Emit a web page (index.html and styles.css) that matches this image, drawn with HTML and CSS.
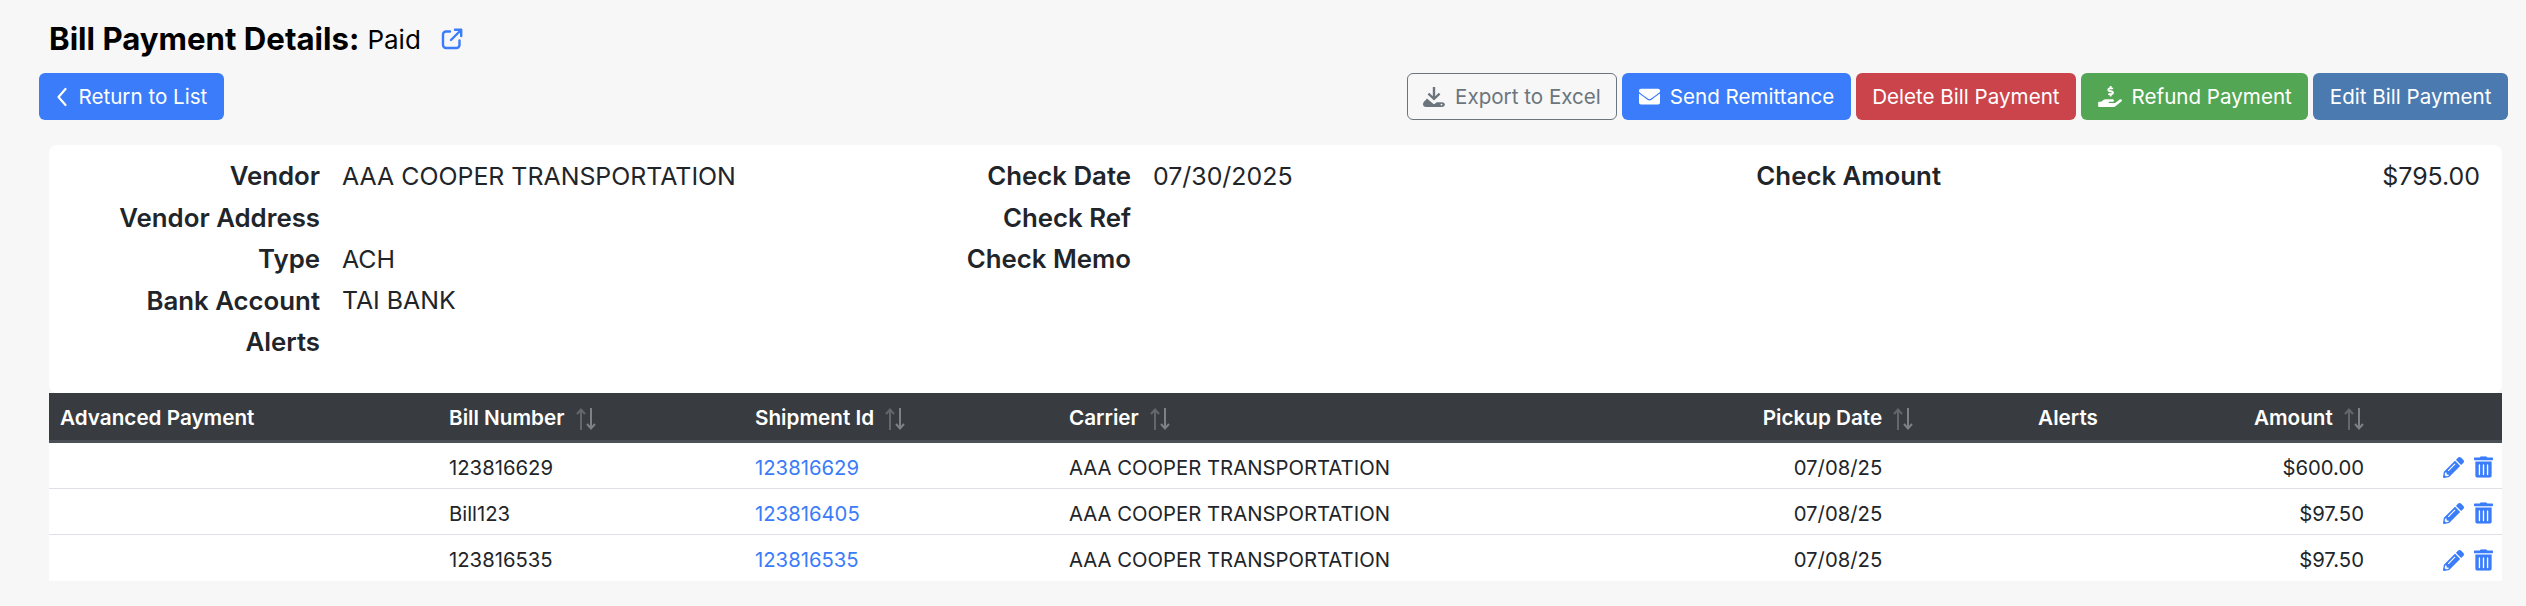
FILE: index.html
```html
<!DOCTYPE html>
<html lang="en">
<head>
  <meta charset="UTF-8">
  <title>Bill Payment Details</title>
  <link rel="stylesheet" href="styles.css">
</head>
<body>
  <!-- Title -->
  <div class="page-title">
    <h1>Bill Payment Details:</h1>
    <span class="status">Paid</span>
    <a href="#" class="title-link">
      <svg class="icon-open" viewBox="0 0 22 22" fill="none" stroke="currentColor" stroke-width="2.4" stroke-linecap="round" stroke-linejoin="round"><path d="M9 3.5H5A3 3 0 0 0 2 6.500V17a3 3 0 0 0 3 3h10.500a3 3 0 0 0 3-3v-4.500"/><path d="M14 1.800h6.200V8M20 2l-10 10"/></svg>
    </a>
  </div>

  <!-- Buttons -->
  <div class="actions">
    <button class="btn btn-blue">
      <svg class="icon-back" viewBox="0 0 12 20" fill="none" stroke="currentColor" stroke-width="2.200" stroke-linecap="round" stroke-linejoin="round"><path d="M9.500 2L2.500 10l7 8"/></svg>
      Return to List
    </button>
    <div class="actions-right">
      <button class="btn btn-outline">
        <svg class="icon-export" viewBox="0 0 22 20" fill="currentColor"><path d="M9.800 0h2.400v9.200l3.600-3.400 1.600 1.600-6.400 6.200-6.400-6.200 1.600-1.600 3.600 3.400z"/><path fill-rule="evenodd" d="M4 11.500l6.200 5.300c.5.400 1.100.4 1.600 0l2-1.600H19a3 3 0 0 1 3 2.400A2.900 2.900 0 0 1 19 20H3a3 3 0 0 1-3-2.800c0-1.700 1.300-2.900 2-3.500zM18.500 16.700a.9.900 0 1 0 0 1.800.9.900 0 0 0 0-1.800z"/></svg>
        Export to Excel
      </button>
      <button class="btn btn-blue">
        <svg class="icon-mail" viewBox="0 0 512 512" fill="currentColor"><path d="M502.3 190.800c3.900-3.100 9.700-.2 9.700 4.700V400c0 26.500-21.500 48-48 48H48c-26.500 0-48-21.500-48-48V195.600c0-5 5.700-7.800 9.700-4.700 22.400 17.400 52.100 39.500 154.100 113.600 21.100 15.400 56.700 47.800 92.200 47.600 35.700.3 72-32.800 92.300-47.600 102-74.100 131.600-96.300 154-113.700zM256 320c23.200.4 56.600-29.200 73.400-41.400 132.700-96.300 142.800-104.700 173.400-128.700 5.800-4.500 9.200-11.500 9.200-18.900v-19c0-26.500-21.500-48-48-48H48C21.500 64 0 85.500 0 112v19c0 7.400 3.400 14.300 9.200 18.900 30.600 23.900 40.700 32.400 173.400 128.700 16.800 12.200 50.200 41.800 73.400 41.400z"/></svg>
        Send Remittance
      </button>
      <button class="btn btn-red">Delete Bill Payment</button>
      <button class="btn btn-green">
        <svg class="icon-refund" viewBox="0 0 576 512" fill="currentColor"><path d="M271.060 144.300l54.270 14.300a8.590 8.590 0 0 1 6.630 8.100c0 4.600-4.090 8.400-9.120 8.400h-35.600a30 30 0 0 1-11.190-2.200c-5.240-2.200-11.280-1.700-15.300 2l-19 17.500a11.680 11.680 0 0 0-2.250 2.660 11.420 11.420 0 0 0 3.880 15.740 83.420 83.420 0 0 0 34.510 11.500V240c0 8.800 7.830 16 17.370 16h17.370c9.550 0 17.380-7.200 17.380-16V222.400c32.930-3.600 57.840-31 53.500-63-3.150-23-22.460-41.300-46.560-47.700L282.680 97.400a8.590 8.590 0 0 1-6.630-8.100c0-4.600 4.090-8.400 9.120-8.400h35.600A30 30 0 0 1 332 83.100c5.230 2.200 11.280 1.700 15.300-2l19-17.500A11.310 11.310 0 0 0 368.470 61a11.430 11.430 0 0 0-3.840-15.780 83.820 83.820 0 0 0-34.520-11.500V16c0-8.800-7.820-16-17.37-16H295.37C285.820 0 278 7.200 278 16V33.600c-32.890 3.600-57.850 31-53.510 63C227.630 119.600 247 137.900 271.060 144.300zM565.270 328.100c-11.800-10.700-30.200-10-42.600 0L430.270 402a63.640 63.640 0 0 1-40 14H272a16 16 0 0 1 0-32h78.290c15.900 0 30.710-10.900 33.250-26.600a31.200 31.200 0 0 0 .46-5.460A32 32 0 0 0 352 320H192a117.660 117.660 0 0 0-74.100 26.290L71.400 384H16A16 16 0 0 0 0 400v96a16 16 0 0 0 16 16H372.770a64 64 0 0 0 40-14L564 377a32 32 0 0 0 1.270-48.900z"/></svg>
        Refund Payment
      </button>
      <button class="btn btn-steel">Edit Bill Payment</button>
    </div>
  </div>

  <!-- Payment summary -->
  <section class="summary">
    <dl class="group group-vendor">
      <dt>Vendor</dt><dd>AAA COOPER TRANSPORTATION</dd>
      <dt>Vendor Address</dt><dd></dd>
      <dt>Type</dt><dd>ACH</dd>
      <dt>Bank Account</dt><dd>TAI BANK</dd>
      <dt>Alerts</dt><dd></dd>
    </dl>
    <dl class="group group-check">
      <dt>Check Date</dt><dd>07/30/2025</dd>
      <dt>Check Ref</dt><dd></dd>
      <dt>Check Memo</dt><dd></dd>
    </dl>
    <dl class="group group-amount">
      <dt>Check Amount</dt><dd>$795.00</dd>
    </dl>
  </section>

  <!-- Bills -->
  <table class="bills">
    <colgroup>
      <col class="col-adv"><col class="col-bill"><col class="col-ship"><col class="col-carrier">
      <col class="col-date"><col class="col-alerts"><col class="col-amount"><col class="col-tools">
    </colgroup>
    <thead>
      <tr>
        <th>Advanced Payment</th>
        <th>Bill Number <svg class="sort" viewBox="0 0 20 22"><use href="#sort-arrows"/></svg></th>
        <th>Shipment Id <svg class="sort" viewBox="0 0 20 22"><use href="#sort-arrows"/></svg></th>
        <th>Carrier <svg class="sort" viewBox="0 0 20 22"><use href="#sort-arrows"/></svg></th>
        <th class="center">Pickup Date <svg class="sort" viewBox="0 0 20 22"><use href="#sort-arrows"/></svg></th>
        <th class="center">Alerts</th>
        <th class="right">Amount <svg class="sort" viewBox="0 0 20 22"><use href="#sort-arrows"/></svg></th>
        <th></th>
      </tr>
    </thead>
    <tbody>
      <tr>
        <td></td><td>123816629</td><td><a href="#">123816629</a></td><td>AAA COOPER TRANSPORTATION</td>
        <td class="center">07/08/25</td><td></td><td class="right">$600.00</td>
        <td class="tools"><svg class="icon-pencil" viewBox="0 0 512 512"><use href="#pencil"/></svg><svg class="icon-trash" viewBox="0 0 448 512"><use href="#trash"/></svg></td>
      </tr>
      <tr>
        <td></td><td>Bill123</td><td><a href="#">123816405</a></td><td>AAA COOPER TRANSPORTATION</td>
        <td class="center">07/08/25</td><td></td><td class="right">$97.50</td>
        <td class="tools"><svg class="icon-pencil" viewBox="0 0 512 512"><use href="#pencil"/></svg><svg class="icon-trash" viewBox="0 0 448 512"><use href="#trash"/></svg></td>
      </tr>
      <tr>
        <td></td><td>123816535</td><td><a href="#">123816535</a></td><td>AAA COOPER TRANSPORTATION</td>
        <td class="center">07/08/25</td><td></td><td class="right">$97.50</td>
        <td class="tools"><svg class="icon-pencil" viewBox="0 0 512 512"><use href="#pencil"/></svg><svg class="icon-trash" viewBox="0 0 448 512"><use href="#trash"/></svg></td>
      </tr>
    </tbody>
  </table>

  <!-- Shared icons -->
  <svg class="defs" aria-hidden="true">
    <symbol id="sort-arrows" viewBox="0 0 20 22">
      <path d="M5 22V2M1 6l4-4.500L9 6" fill="none" stroke="#63686d" stroke-width="2"/>
      <path d="M15 0v20M11 16l4 4.500 4-4.500" fill="none" stroke="#7d8287" stroke-width="2"/>
    </symbol>
    <symbol id="pencil" viewBox="0 0 512 512">
      <path fill="currentColor" d="M497.900 142.100l-46.100 46.100c-4.700 4.700-12.300 4.700-17 0l-111-111c-4.700-4.700-4.700-12.300 0-17l46.100-46.100c18.700-18.700 49.100-18.700 67.900 0l60.100 60.100c18.800 18.700 18.800 49.100 0 67.900zM284.200 99.800L21.600 362.400.4 483.900c-2.900 16.400 11.400 30.600 27.800 27.800l121.500-21.300 262.600-262.600c4.700-4.700 4.700-12.300 0-17l-111-111c-4.800-4.700-12.400-4.700-17.100 0zM124.100 339.900c-5.500-5.500-5.500-14.300 0-19.800l154-154c5.500-5.500 14.300-5.500 19.800 0s5.500 14.300 0 19.800l-154 154c-5.500 5.500-14.300 5.500-19.800 0zM88 424h48v36.300l-64.500 11.300-31.100-31.100L51.700 376H88v48z"/>
    </symbol>
    <symbol id="trash" viewBox="0 0 448 512">
      <path fill="currentColor" d="M32 464a48 48 0 0 0 48 48h288a48 48 0 0 0 48-48V128H32zm272-256a16 16 0 0 1 32 0v224a16 16 0 0 1-32 0zm-96 0a16 16 0 0 1 32 0v224a16 16 0 0 1-32 0zm-96 0a16 16 0 0 1 32 0v224a16 16 0 0 1-32 0zM432 32H312l-9.400-18.700A24 24 0 0 0 281.100 0H166.800a23.720 23.720 0 0 0-21.400 13.300L136 32H16A16 16 0 0 0 0 48v32a16 16 0 0 0 16 16h416a16 16 0 0 0 16-16V48a16 16 0 0 0-16-16z"/>
    </symbol>
  </svg>
</body>
</html>
```

FILE: styles.css
```css
/* General Layout */
body {
  font-family: Inter, "Liberation Sans", sans-serif;
  margin: 0;
  padding: 16px 18px 0 39px;
  background: #f7f7f7;
  color: #212529;
}

a {
  color: #3a7cf9;
  text-decoration: none;
}

/* Title */
.page-title {
  display: flex;
  align-items: center;
  height: 42px;
  margin-bottom: 15px;
  padding-top: 4px;
  padding-left: 10px;
  box-sizing: border-box;
  color: #000;
}

.page-title h1 {
  margin: 0;
  font-size: 31.200px;
  font-weight: 700;
}

.status {
  margin-left: 8px;
  font-size: 26px;
}

.title-link {
  display: flex;
  margin-left: 20px;
}

.icon-open {
  width: 22px;
  height: 22px;
}

/* Buttons */
.actions {
  display: flex;
  justify-content: space-between;
  margin-bottom: 25px;
}

.actions-right {
  display: flex;
  gap: 5px;
}

.btn {
  display: flex;
  align-items: center;
  height: 47px;
  padding: 0 15.500px;
  border: 1px solid transparent;
  border-radius: 6px;
  font-family: inherit;
  font-size: 20.600px;
  color: #fff;
}

.btn svg {
  flex: none;
  margin-right: 10px;
}

.btn-blue { background: #3a7cf9; }
.btn-red { background: #cb444b; }
.btn-green { background: #53a653; }
.btn-steel { background: #4a7ab0; }

.btn-outline {
  background: transparent;
  border-color: #6c757d;
  color: #6c757d;
}

.btn .icon-back { width: 12px; height: 20px; margin-right: 11px; }
.icon-export { width: 22px; height: 20px; }
.icon-mail { width: 21px; height: 21px; }
.icon-refund { width: 24px; height: 21px; }

/* Summary card */
.summary {
  display: flex;
  height: 238px;
  margin-right: 6px;
  margin-left: 10px;
  padding-top: 10px;
  background: #fff;
  border-radius: 8px;
}

.group {
  display: grid;
  grid-auto-rows: 41.500px;
  align-content: start;
  align-items: center;
  column-gap: 22px;
  margin: 0;
  font-size: 24.900px;
}

.group dt {
  font-size: 25.800px;
  font-weight: 600;
  text-align: right;
}

.group dd {
  margin: 0;
}

.group-vendor {
  width: 817px;
  grid-template-columns: 271px 1fr;
}

.group-check {
  width: 788px;
  grid-template-columns: 265px 1fr;
}

.group-amount {
  width: 826px;
  grid-template-columns: 287px 1fr;
}

.group-amount dd {
  text-align: right;
}

/* Bills table */
.bills {
  width: 2453px;
  margin-left: 10px;
  border-collapse: separate;
  border-spacing: 0;
  table-layout: fixed;
  background: #fff;
  font-size: 20.300px;
}

.col-adv { width: 389px; }
.col-bill { width: 306px; }
.col-ship { width: 314px; }
.col-carrier { width: 662px; }
.col-date { width: 236px; }
.col-alerts { width: 224px; }
.col-amount { width: 195px; }
.col-tools { width: 127px; }

.bills th {
  height: 50px;
  padding: 2px 11px 0;
  box-sizing: border-box;
  background: #383c40;
  border-bottom: 3px solid #4b5056;
  color: #fff;
  font-size: 20.700px;
  font-weight: 600;
  text-align: left;
}

.bills td {
  height: 46px;
  padding: 3px 11px 0;
  box-sizing: border-box;
  border-bottom: 1px solid #dee2e6;
}

.bills tr:last-child td {
  border-bottom: 0;
}

.bills .center { text-align: center; }
.bills .right { text-align: right; }

.sort {
  width: 20px;
  height: 22px;
  margin-left: 6px;
  vertical-align: -5px;
}

.bills .tools {
  padding: 3px 9px 0 0;
  color: #3a7cf9;
  text-align: right;
  font-size: 0;
}

.icon-pencil {
  width: 21px;
  height: 21px;
  margin-right: 10px;
}

.icon-trash {
  width: 19px;
  height: 22px;
}

.defs {
  display: none;
}
```
